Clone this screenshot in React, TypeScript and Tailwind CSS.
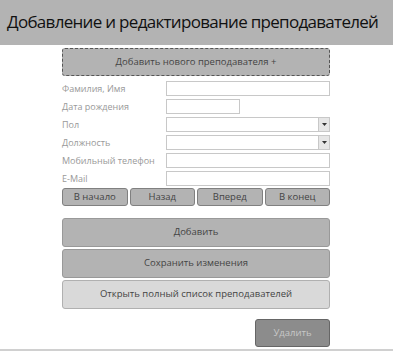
const font = { fontFamily: '"Open Sans", "Noto Sans", sans-serif' }

function TextField({ w = 'w-[164px]' }: { w?: string }) {
  return <div className={`${w} h-[15px] bg-white border border-[#c8c8c8]`} />
}

function SelectField() {
  return (
    <div className="w-[164px] h-[15px] bg-white border border-[#c8c8c8] flex justify-end">
      <div className="w-[11px] h-full bg-[#e6e6e6] border-l border-[#c8c8c8] flex items-center justify-center">
        <svg width="5" height="3" viewBox="0 0 5 3">
          <path d="M0 0h5L2.5 3z" fill="#333" />
        </svg>
      </div>
    </div>
  )
}

const fields: { label: string; kind: 'text' | 'date' | 'select' }[] = [
  { label: 'Фамилия, Имя', kind: 'text' },
  { label: 'Дата рождения', kind: 'date' },
  { label: 'Пол', kind: 'select' },
  { label: 'Должность', kind: 'select' },
  { label: 'Мобильный телефон', kind: 'text' },
  { label: 'E-Mail', kind: 'text' },
]

export default function App() {
  return (
    <div className="w-[393px] h-[351px] bg-white overflow-hidden flex flex-col" style={font}>
      <div className="h-[45px] shrink-0 bg-[#b3b3b3] flex items-center pl-[7px] pb-[2px] text-[17px] text-[#111] tracking-[-0.7px] whitespace-nowrap">
        Добавление и редактирование преподавателей
      </div>

      <div className="pl-[62px] pr-[63px] pt-[3px] flex flex-col">
        <button className="h-[28px] rounded-[3px] border border-dashed border-[#555] bg-[#b3b3b3] text-[9.5px] text-[#444]">
          Добавить нового преподавателя +
        </button>

        <div className="mt-[5px] flex flex-col gap-[3px]">
          {fields.map((f) => (
            <div key={f.label} className="flex items-center h-[15px]">
              <span className="w-[104px] text-[9px] text-[#999] whitespace-nowrap">{f.label}</span>
              {f.kind === 'select' ? <SelectField /> : <TextField w={f.kind === 'date' ? 'w-[74px]' : 'w-[164px]'} />}
            </div>
          ))}
        </div>

        <div className="mt-[2px] grid grid-cols-4 gap-[2px] h-[18px]">
          {['В начало', 'Назад', 'Вперед', 'В конец'].map((t) => (
            <button key={t} className="rounded-[3px] border border-[#808080] bg-[#b3b3b3] text-[9.5px] text-[#444]">
              {t}
            </button>
          ))}
        </div>

        <div className="mt-[12px] flex flex-col gap-[2px]">
          <button className="h-[29px] rounded-[3px] border border-[#999] bg-[#b3b3b3] text-[9.5px] text-[#444]">
            Добавить
          </button>
          <button className="h-[29px] rounded-[3px] border border-[#999] bg-[#b3b3b3] text-[9.5px] text-[#444]">
            Сохранить изменения
          </button>
          <button className="h-[29px] rounded-[3px] border border-[#b0b0b0] bg-[#d9d9d9] text-[9.5px] text-[#444]">
            Открыть полный список преподавателей
          </button>
        </div>

        <div className="mt-[10px] flex justify-end">
          <button className="w-[75px] h-[28px] rounded-[3px] border border-[#666] bg-[#8c8c8c] text-[9.5px] text-[#c8c8c8]">
            Удалить
          </button>
        </div>
      </div>
      <div className="mt-auto h-[2px] bg-[#d0d0d0]" />
    </div>
  )
}
